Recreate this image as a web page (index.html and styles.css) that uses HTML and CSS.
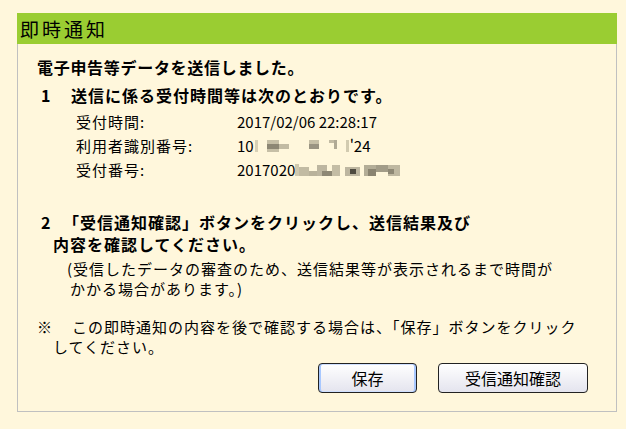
FILE: index.html
```html
<!DOCTYPE html>
<html lang="ja">
<head>
  <meta charset="UTF-8" />
  <title>即時通知</title>
  <link rel="stylesheet" href="styles.css">
</head>
<body>

<div class="panel">
  <div class="panel-title">即時通知</div>

  <div class="panel-body">
    <p class="lead">電子申告等データを送信しました。</p>

    <p class="item"><span class="num num-wide">1</span>送信に係る受付時間等は次のとおりです。</p>

    <dl class="receipt">
      <div class="row">
        <dt>受付時間:</dt>
        <dd>2017/02/06 22:28:17</dd>
      </div>
      <div class="row">
        <dt>利用者識別番号:</dt>
        <dd>10<svg class="mask" width="96" height="14" viewBox="0 0 96 14">
            <rect x="1" y="1" width="3" height="12" fill="#d8d1b6"/>
            <rect x="13" y="1" width="12" height="4" fill="#c6bfa6"/>
            <rect x="13" y="5" width="12" height="5" fill="#8d8774"/>
            <rect x="13" y="10" width="12" height="3" fill="#c6bfa6"/>
            <rect x="25" y="5" width="10" height="5" fill="#c2bba3"/>
            <rect x="55" y="1" width="10" height="4" fill="#c6bfa6"/>
            <rect x="55" y="5" width="10" height="5" fill="#9a9482"/>
            <rect x="75" y="1" width="8" height="3" fill="#c2bba3"/>
            <rect x="80" y="1" width="3" height="9" fill="#b0aa95"/>
            <rect x="92" y="1" width="3" height="12" fill="#d2cbb0"/>
          </svg>'24</dd>
      </div>
      <div class="row">
        <dt>受付番号:</dt>
        <dd>2017020<svg class="mask" width="106" height="14" viewBox="0 0 106 14">
            <rect x="0" y="1" width="4" height="12" fill="#d0c9ae"/>
            <rect x="4" y="4" width="10" height="9" fill="#c2bba3"/>
            <rect x="14" y="8" width="8" height="5" fill="#b9b29b"/>
            <rect x="22" y="2" width="10" height="11" fill="#bdb6a0"/>
            <rect x="27" y="8" width="10" height="5" fill="#8e8875"/>
            <rect x="37" y="2" width="8" height="11" fill="#c4bda5"/>
            <rect x="50" y="4" width="15" height="9" fill="#bdb6a0"/>
            <rect x="55" y="6" width="6" height="5" fill="#4e4a40"/>
            <rect x="69" y="2" width="12" height="11" fill="#b3ad97"/>
            <rect x="73" y="6" width="8" height="7" fill="#8a8471"/>
            <rect x="81" y="2" width="12" height="7" fill="#a29c88"/>
            <rect x="93" y="2" width="12" height="11" fill="#bfb8a1"/>
            <rect x="93" y="6" width="6" height="5" fill="#8e8875"/>
          </svg></dd>
      </div>
    </dl>

    <p class="item item-two"><span class="num">2</span>「受信通知確認」ボタンをクリックし、送信結果及び<br>内容を確認してください。</p>

    <p class="note">(受信したデータの審査のため、送信結果等が表示されるまで時間が<br>かかる場合があります。)</p>

    <p class="remark"><span class="mark">※</span>この即時通知の内容を後で確認する場合は、「保存」ボタンをクリック<br>してください。</p>

    <div class="actions">
      <button class="btn btn-focus" type="button">保存</button>
      <button class="btn btn-wide" type="button">受信通知確認</button>
    </div>
  </div>
</div>

</body>
</html>
```

FILE: styles.css
```css
* {
  box-sizing: border-box;
  margin: 0;
  padding: 0;
}

body {
  font-family: "Noto Sans CJK JP", "Noto Sans", sans-serif;
  background: #fff7dc;
  color: #000;
}

.panel {
  width: 600px;
  margin: 13px 0 0 17px;
}

.panel-title {
  background: #9acd32;
  height: 31px;
  line-height: 31px;
  padding-left: 3px;
  font-size: 19px;
  letter-spacing: 3px;
}

.panel-body {
  border: 1px solid #c0c0c0;
  border-top: none;
  padding: 11px 28px 18px 19px;
  font-size: 15px;
  letter-spacing: 1px;
}

.lead {
  font-size: 16px;
  font-weight: 700;
  line-height: 24px;
  letter-spacing: 0.7px;
}

.item {
  font-size: 16px;
  font-weight: 700;
  line-height: 24px;
  margin-top: 4px;
  padding-left: 16px;
  text-indent: -12px;
  white-space: nowrap;
}

.num {
  display: inline-block;
  text-indent: 0;
  width: 22px;
}

.num-wide {
  width: 30px;
}

.receipt {
  margin-top: 3px;
  padding-left: 39px;
}

.row {
  display: flex;
  line-height: 24px;
}

.row dt {
  width: 161px;
}

.row dd {
  letter-spacing: 0;
  display: flex;
  align-items: center;
}

.mask {
  display: block;
}

.item-two {
  line-height: 22px;
  margin-top: 29px;
}

.note {
  line-height: 20px;
  margin-top: 4px;
  padding-left: 33px;
  text-indent: -3px;
  white-space: nowrap;
}

.remark {
  line-height: 20px;
  margin-top: 18px;
  padding-left: 16px;
  text-indent: -16px;
  white-space: nowrap;
}

.mark {
  display: inline-block;
  text-indent: 0;
  width: 35px;
}

.actions {
  display: flex;
  justify-content: flex-end;
  gap: 21px;
  margin-top: 6px;
}

.btn {
  height: 30px;
  width: 99px;
  font-family: inherit;
  font-size: 16px;
  color: #000;
  border: 1px solid #222;
  border-radius: 4px;
  background: linear-gradient(#ffffff, #e4e4ee);
  letter-spacing: 0;
}

.btn-wide {
  width: 150px;
}

.btn-focus {
  box-shadow: inset 2px 0 0 #a8c8ff, inset -2px 0 0 #a8c8ff, inset 0 1px 0 #d0e0ff, inset 0 -1px 0 #d0e0ff;
}
```
